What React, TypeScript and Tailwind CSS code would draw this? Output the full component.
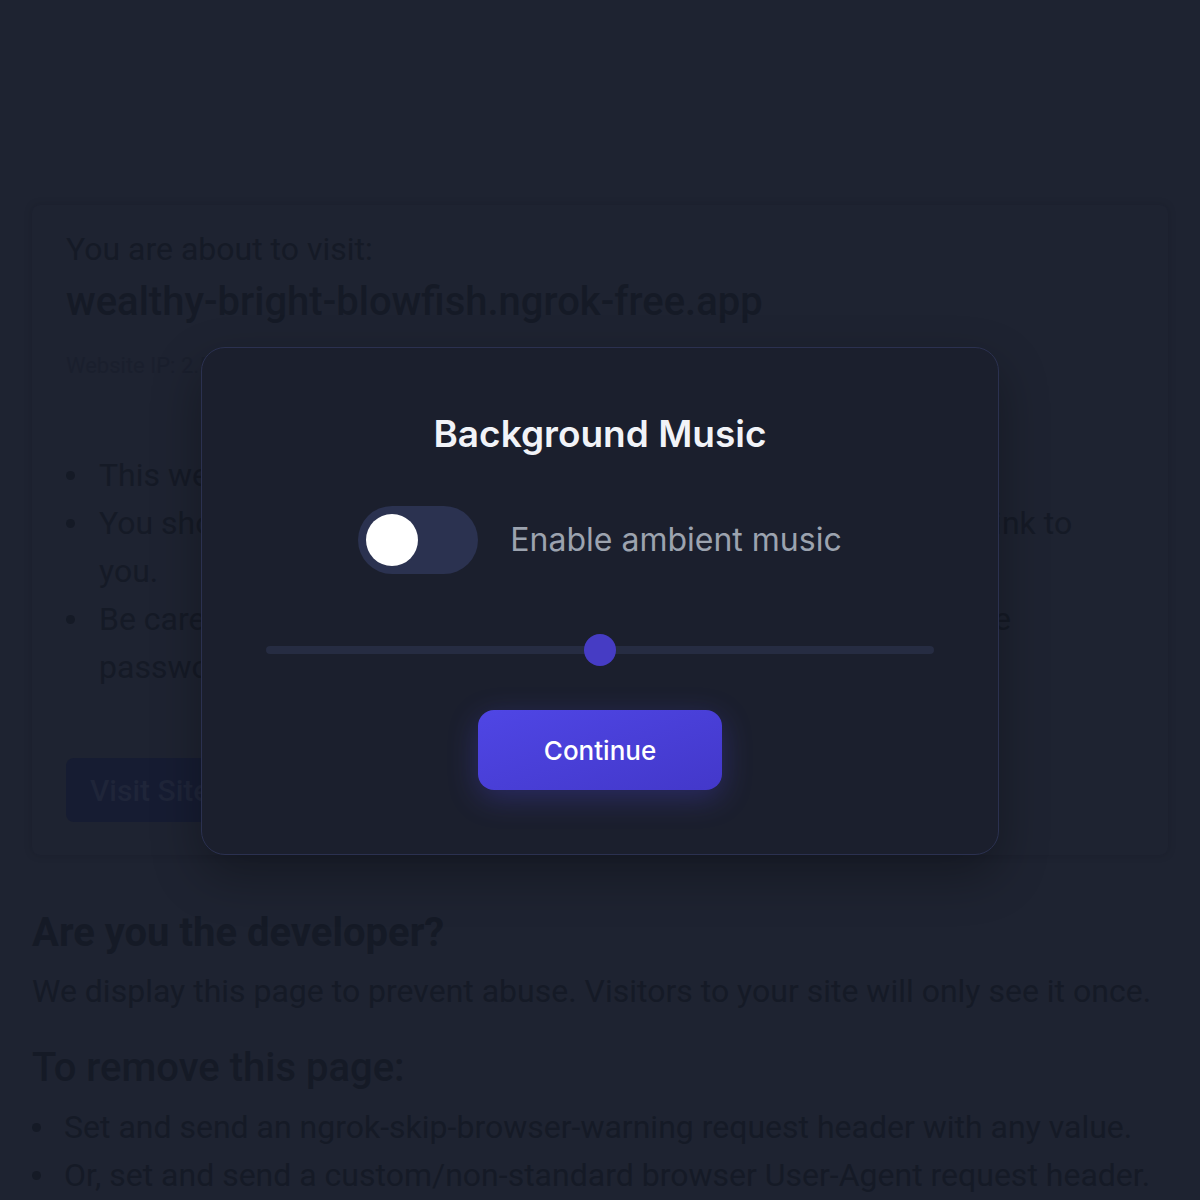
import React from "react";

const bgText = "text-[#151a26]";

function Bullet({ children, col }: { children: React.ReactNode; col: string }) {
  return (
    <li className="flex">
      <span className={`${col} shrink-0 flex h-[48px] items-center`}>
        <span className="block h-[9px] w-[9px] rounded-full bg-[#151a26]" />
      </span>
      <span>{children}</span>
    </li>
  );
}

export default function App() {
  return (
    <div className="relative h-[1200px] w-[1200px] overflow-hidden bg-[#1e2331]" style={{ fontFamily: "Roboto, 'Liberation Sans', sans-serif" }}>
      {/* Background page */}
      <div className="px-[32px] pt-[205px]">
        <div className="rounded-lg bg-[#1e2331] px-[34px] pt-[26px] pb-[33px] shadow-[0_0_8px_rgba(10,12,20,0.15)]">
          <div className={`text-[32px] leading-[36px] ${bgText}`}>You are about to visit:</div>
          <div className={`mt-[13px] text-[40px] leading-[44px] font-medium ${bgText}`}>wealthy-bright-blowfish.ngrok-free.app</div>
          <div className="mt-[28px] text-[22px] leading-[28px] text-[#1a1f2d]">Website IP: 2.57.122.81</div>
          <ul className={`mt-[71px] text-[32px] leading-[48px] ${bgText}`}>
            <Bullet col="w-[33px]">This website is served for free through ngrok.com.</Bullet>
            <Bullet col="w-[33px]">You should only visit this website if you trust whoever sent the link to you.</Bullet>
            <Bullet col="w-[33px]">Be careful about disclosing personal or financial information like passwords, phone numbers, or credit cards.</Bullet>
          </ul>
          <div className="mt-[67px] flex">
            <div className="flex h-[64px] items-center rounded-lg bg-[#161c32] px-[24px] text-[30px] font-medium text-[#1f2539]">Visit Site</div>
          </div>
        </div>
        <div className={`mt-[55px] text-[40px] leading-[46px] font-bold ${bgText}`}>Are you the developer?</div>
        <div className={`mt-[15px] text-[32px] leading-[40px] ${bgText}`}>We display this page to prevent abuse. Visitors to your site will only see it once.</div>
        <div className={`mt-[33px] text-[40px] leading-[48px] font-medium ${bgText}`}>To remove this page:</div>
        <ul className={`mt-[11px] text-[32px] leading-[48px] ${bgText}`}>
          <Bullet col="w-[32px]">Set and send an ngrok-skip-browser-warning request header with any value.</Bullet>
          <Bullet col="w-[32px]">Or, set and send a custom/non-standard browser User-Agent request header.</Bullet>
        </ul>
      </div>

      {/* Modal */}
      <div
        className="absolute left-[201px] top-[347px] w-[798px] rounded-3xl border border-[#2b3150] bg-[#1b1f2d] p-16 shadow-[0_20px_50px_rgba(0,0,0,0.3)]"
        style={{ fontFamily: "Inter, 'Noto Sans', sans-serif" }}
      >
        <h2 className="text-center text-[37px] leading-[44px] font-semibold text-[#f1f3f8]">Background Music</h2>
        <div className="mt-[50px] flex items-center justify-center gap-8">
          <div className="flex h-[68px] w-[120px] items-center rounded-full bg-[#2b3250] pl-[8px]">
            <div className="h-[52px] w-[52px] rounded-full bg-white" />
          </div>
          <span className="text-[32px] leading-[40px] text-[#9ca3af]">Enable ambient music</span>
        </div>
        <div className="mt-[60px] relative flex h-[32px] items-center">
          <div className="h-[8px] w-full rounded-full bg-[#262c42]" />
          <div className="absolute left-1/2 top-0 h-[32px] w-[32px] -translate-x-1/2 rounded-full bg-[#463cc4]" />
        </div>
        <div className="mt-[44px] flex justify-center">
          <button className="flex h-[80px] w-[244px] items-center justify-center rounded-2xl bg-gradient-to-br from-[#4f46e5] to-[#4338ca] text-[26px] font-medium text-white shadow-[0_8px_30px_rgba(79,70,229,0.3)]">
            Continue
          </button>
        </div>
      </div>
    </div>
  );
}
